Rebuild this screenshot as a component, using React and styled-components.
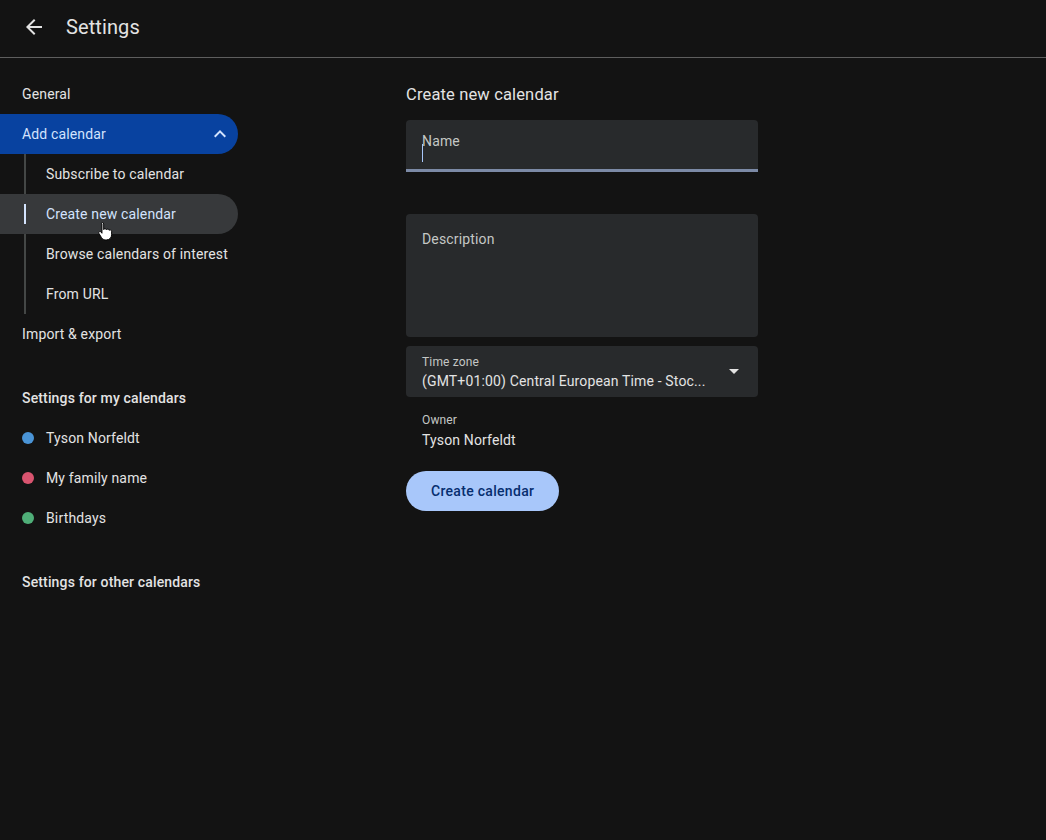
import React from 'react'
import styled, { createGlobalStyle } from 'styled-components'

const Global = createGlobalStyle`
  html, body { margin: 0; padding: 0; background: #131313; }
  body { font-family: Roboto, "Noto Sans", Arial, sans-serif; color: #e3e3e3; letter-spacing: 0.15px; }
  * { box-sizing: border-box; }
`;

const Page = styled.div`
  width: 1046px;
  height: 840px;
  background: #131313;
  display: flex;
  flex-direction: column;
  overflow: hidden;
`;

const Header = styled.header`
  height: 58px;
  display: flex;
  align-items: center;
  padding: 0 0 4px 22px;
  border-bottom: 1px solid #5e5e5e;
  flex-shrink: 0;
`;

const BackBtn = styled.button`
  width: 24px;
  height: 24px;
  padding: 0;
  border: 0;
  background: none;
  display: flex;
  align-items: center;
  justify-content: center;
  margin-right: 20px;
`;

const Title = styled.h1`
  margin: 0;
  font-size: 20px;
  font-weight: 400;
  color: #e3e3e3;
  letter-spacing: 0.1px;
`;

const Body = styled.div`
  flex: 1;
  display: flex;
`;

const Sidebar = styled.nav`
  width: 238px;
  padding-top: 16px;
  display: flex;
  flex-direction: column;
  margin-right: 168px;
`;

const NavItem = styled.div`
  position: relative;
  height: 40px;
  display: flex;
  align-items: center;
  justify-content: space-between;
  padding: 0 6px 0 ${p => (p.$sub ? 46 : 22)}px;
  font-size: 14px;
  white-space: nowrap;
  color: ${p => (p.$active || p.$selected ? '#d3e3fd' : '#e3e3e3')};
  background: ${p => (p.$active ? '#0842a0' : p.$selected ? '#37393b' : 'transparent')};
  border-radius: 0 20px 20px 0;
`;

const SubGroup = styled.div`
  position: relative;
  display: flex;
  flex-direction: column;
  &::before {
    content: '';
    position: absolute;
    left: 24px;
    top: 0;
    bottom: 0;
    width: 2px;
    background: #444746;
  }
`;

const Marker = styled.span`
  position: absolute;
  left: 24px;
  top: 10px;
  width: 2px;
  height: 20px;
  background: #d3e3fd;
  z-index: 1;
`;

const Section = styled.div`
  height: 40px;
  display: flex;
  align-items: center;
  padding-left: 22px;
  font-size: 14px;
  font-weight: 500;
  color: #e3e3e3;
  margin-top: ${p => p.$gap || 0}px;
`;

const CalItem = styled.div`
  height: 40px;
  display: flex;
  align-items: center;
  padding-left: 22px;
  font-size: 14px;
  color: #e3e3e3;
`;

const Dot = styled.span`
  width: 12px;
  height: 12px;
  border-radius: 50%;
  background: ${p => p.$color};
  margin-right: 12px;
`;

const Main = styled.main`
  width: 352px;
  padding-top: 16px;
  display: flex;
  flex-direction: column;
`;

const Heading = styled.h2`
  margin: 0;
  height: 40px;
  display: flex;
  align-items: center;
  font-size: 16.5px;
  font-weight: 400;
  color: #e3e3e3;
  margin-bottom: 6px;
`;

const Field = styled.div`
  position: relative;
  background: #282a2c;
  border-radius: ${p => (p.$focused ? '4px 4px 0 0' : '4px')};
  height: ${p => p.$h}px;
  padding: ${p => p.$pad || '11px 16px 0'};
  ${p => p.$focused && 'border-bottom: 3px solid #7c8aa6;'}
  margin-bottom: ${p => p.$mb || 0}px;
  display: flex;
  flex-direction: column;
`;

const FieldLabel = styled.span`
  font-size: ${p => (p.$small ? 12 : 14)}px;
  color: #c4c7c5;
  line-height: ${p => (p.$small ? 16 : 20)}px;
`;

const Caret = styled.span`
  position: absolute;
  left: 16px;
  top: 24px;
  width: 1px;
  height: 18px;
  background: #a8c7fa;
`;

const FieldValue = styled.span`
  font-size: 14px;
  color: #e3e3e3;
  line-height: 20px;
  margin-top: 1px;
`;

const DropArrow = styled.span`
  position: absolute;
  right: 19px;
  top: 23px;
  width: 0;
  height: 0;
  border-left: 5px solid transparent;
  border-right: 5px solid transparent;
  border-top: 5px solid #e3e3e3;
`;

const Owner = styled.div`
  padding: 15px 16px 0;
  display: flex;
  flex-direction: column;
  height: 74px;
`;

const OwnerLabel = styled.span`
  font-size: 12px;
  color: #c4c7c5;
  line-height: 16px;
`;

const OwnerName = styled.span`
  font-size: 14px;
  color: #e3e3e3;
  line-height: 20px;
  margin-top: 2px;
`;

const PrimaryButton = styled.button`
  align-self: flex-start;
  height: 40px;
  padding: 0 25px;
  border: 0;
  border-radius: 20px;
  background: #a8c7fa;
  color: #062e6f;
  font-family: inherit;
  font-size: 14px;
  font-weight: 500;
  letter-spacing: 0.3px;
`;

const Cursor = styled.svg`
  position: absolute;
  left: 98px;
  top: 27px;
  pointer-events: none;
  z-index: 2;
`;

const ArrowLeft = () => (
  <svg width="24" height="24" viewBox="0 0 24 24">
    <path d="M20 11H7.83l5.59-5.59L12 4l-8 8 8 8 1.41-1.41L7.83 13H20v-2z" fill="#e3e3e3" />
  </svg>
);

const ChevronUp = () => (
  <svg width="24" height="24" viewBox="0 0 24 24">
    <path d="M7.41 15.41 12 10.83l4.59 4.58L18 14l-6-6-6 6z" fill="#d3e3fd" />
  </svg>
);

const HandCursor = () => (
  <Cursor width="15" height="20" viewBox="0 0 14 18">
    <path
      d="M4 1.2c.8 0 1.3.6 1.3 1.3v5.2c.2-.6.7-.9 1.3-.9.7 0 1.2.5 1.3 1.100.2-.4.7-.7 1.2-.7.7 0 1.2.5 1.3 1.2.2-.3.6-.5 1-.5.7 0 1.3.6 1.3 1.3v3.3c0 2.8-2 4.8-4.7 4.8H7c-1.6 0-2.8-.8-3.7-2.1L.9 11.3c-.4-.6-.2-1.3.3-1.6.6-.4 1.3-.2 1.7.3l.8 1.1V2.5C2.7 1.8 3.3 1.2 4 1.2z"
      fill="#fff"
      stroke="#000"
      strokeWidth="0.9"
    />
  </Cursor>
);

const calendars = [
  { name: 'Tyson Norfeldt', color: '#4a94d6' },
  { name: 'My family name', color: '#d9546f' },
  { name: 'Birthdays', color: '#4fae78' },
];

const subItems = ['Subscribe to calendar', 'Create new calendar', 'Browse calendars of interest', 'From URL'];

export default function App() {
  return (
    <Page>
      <Global />
      <Header>
        <BackBtn aria-label="Back"><ArrowLeft /></BackBtn>
        <Title>Settings</Title>
      </Header>
      <Body>
        <Sidebar>
          <NavItem>General</NavItem>
          <NavItem $active>
            Add calendar
            <ChevronUp />
          </NavItem>
          <SubGroup>
            {subItems.map(s => (
              <NavItem key={s} $sub $selected={s === 'Create new calendar'}>
                {s === 'Create new calendar' && <Marker />}
                {s}
                {s === 'Create new calendar' && <HandCursor />}
              </NavItem>
            ))}
          </SubGroup>
          <NavItem>Import &amp; export</NavItem>
          <Section $gap={24}>Settings for my calendars</Section>
          {calendars.map(c => (
            <CalItem key={c.name}>
              <Dot $color={c.color} />
              {c.name}
            </CalItem>
          ))}
          <Section $gap={24}>Settings for other calendars</Section>
        </Sidebar>
        <Main>
          <Heading>Create new calendar</Heading>
          <Field $h={52} $focused $mb={42}>
            <FieldLabel>Name</FieldLabel>
            <Caret />
          </Field>
          <Field $h={123} $pad="15px 16px 0" $mb={9}>
            <FieldLabel>Description</FieldLabel>
          </Field>
          <Field $h={51} $pad="8px 16px 0">
            <FieldLabel $small>Time zone</FieldLabel>
            <FieldValue>(GMT+01:00) Central European Time - Stoc...</FieldValue>
            <DropArrow />
          </Field>
          <Owner>
            <OwnerLabel>Owner</OwnerLabel>
            <OwnerName>Tyson Norfeldt</OwnerName>
          </Owner>
          <PrimaryButton>Create calendar</PrimaryButton>
        </Main>
      </Body>
    </Page>
  );
}
